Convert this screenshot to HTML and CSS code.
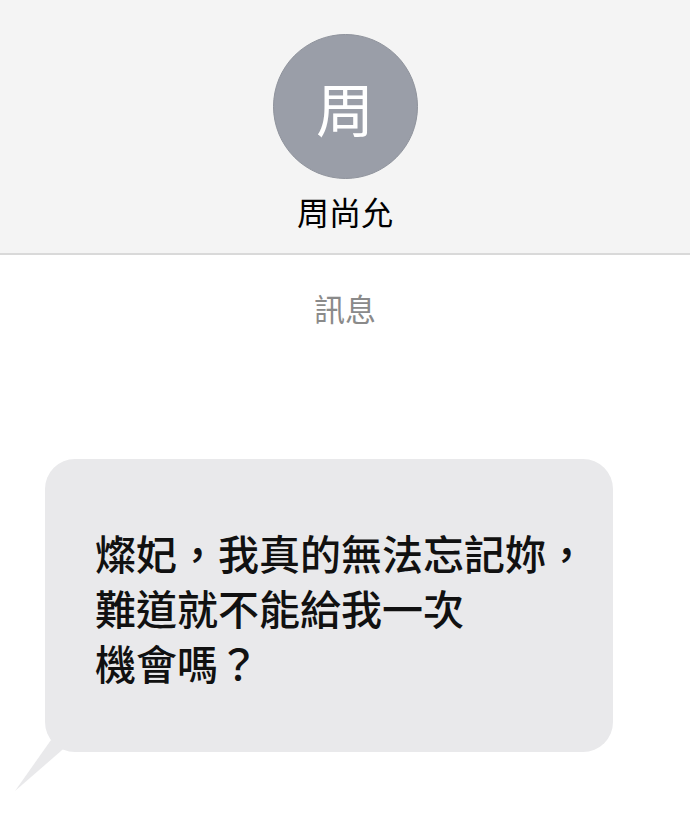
FILE: index.html
```html
<!DOCTYPE html>
<html lang="zh-Hant">
<head>
    <meta charset="UTF-8">
    <meta name="viewport" content="width=device-width, initial-scale=1.0">
    <title>訊息</title>
    <link rel="stylesheet" href="styles.css">
</head>
<body>

<div class="header">
    <div class="avatar">周</div>
    <div class="contact-name">周尚允</div>
</div>

<div class="chat">
    <div class="chat-title">訊息</div>

    <div class="bubble">
        <p class="bubble-text">燦妃，我真的無法忘記妳，<br>難道就不能給我一次<br>機會嗎？</p>
        <!-- 對話框尾巴 -->
        <svg class="bubble-tail" width="60" height="60" viewBox="0 0 60 60">
            <polygon points="36,0 0,51 54,4" fill="#e9e9eb"/>
        </svg>
    </div>
</div>

</body>
</html>
```

FILE: styles.css
```css
* {
    padding: 0;
    margin: 0;
    box-sizing: border-box;
}

body {
    font-family: "Noto Sans CJK TC", "Noto Sans", sans-serif;
    background-color: #fff;
    color: #111;
    width: 690px;
    height: 824px;
    overflow: hidden;
}

.header {
    height: 255px;
    background-color: #f4f4f4;
    border-bottom: 2px solid #d9d9d9;
    padding-top: 34px;
    display: flex;
    flex-direction: column;
    align-items: center;
}

.avatar {
    width: 145px;
    height: 145px;
    border-radius: 50%;
    background-color: #9a9ea8;
    border: 1px solid #8f939c;
    color: #fff;
    font-size: 58px;
    font-weight: 400;
    display: flex;
    align-items: center;
    justify-content: center;
}

.contact-name {
    margin-top: 12px;
    font-size: 32px;
    line-height: 40px;
    font-weight: 400;
    color: #000;
}

.chat {
    display: flex;
    flex-direction: column;
}

.chat-title {
    text-align: center;
    font-size: 31px;
    line-height: 40px;
    margin-top: 33px;
    color: #8a8a8a;
}

.bubble {
    position: relative;
    margin-top: 131px;
    margin-left: 45px;
    width: 568px;
    height: 293px;
    border-radius: 30px;
    background-color: #e9e9eb;
    padding: 66px 0 0 50px;
}

.bubble-text {
    font-size: 41px;
    line-height: 55px;
    font-weight: 500;
    color: #111;
}

.bubble-tail {
    position: absolute;
    left: -30px;
    top: 281px;
}
```
